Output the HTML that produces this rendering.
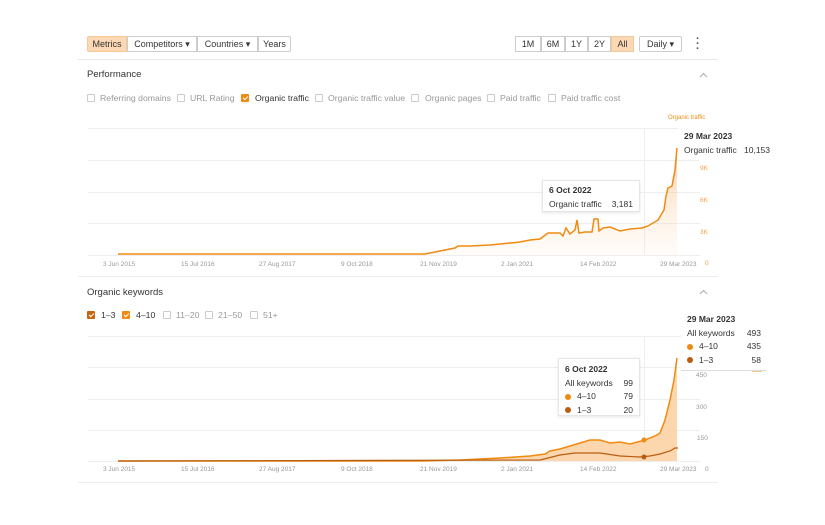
<!DOCTYPE html>
<html><head><meta charset="utf-8"><style>
*{margin:0;padding:0;box-sizing:border-box}
body{width:825px;height:525px;background:#fff;font-family:"Liberation Sans",sans-serif;position:relative;overflow:hidden;color:#333}
.a{position:absolute;white-space:nowrap}
.btn{position:absolute;top:36px;height:16px;border:1px solid #ccc;font-size:9px;line-height:14px;text-align:center;background:#fff;color:#333}
.sel{background:#fcd9b4;border-color:#f5c89c}
.cb{position:absolute;width:8px;height:8px;border:1px solid #ccc;border-radius:1px}
.cbo{background:#f08a10;border-color:#f08a10}
.cbd{background:#c7650e;border-color:#c7650e}
.cbo::after,.cbd::after{content:"";position:absolute;left:2px;top:0px;width:2px;height:4px;border:solid #fff;border-width:0 1px 1px 0;transform:rotate(45deg)}
.lbl{font-size:8.7px;color:#999;position:absolute}
.h{font-size:9.5px;color:#333;position:absolute}
.tt{position:absolute;background:#fff;font-size:8.5px;color:#333}
.ax{font-size:6.5px;color:#999;position:absolute}
.yo{font-size:6.5px;color:#f5a04a;position:absolute}
.dot{display:inline-block;width:6px;height:6px;border-radius:3px;margin-right:6px;vertical-align:middle}
</style></head><body>
<div class="btn sel" style="left:87px;width:40px;border-radius:2px 0 0 2px">Metrics</div>
<div class="btn" style="left:127px;width:70px">Competitors ▾</div>
<div class="btn" style="left:197px;width:61px">Countries ▾</div>
<div class="btn" style="left:258px;width:33px;border-radius:0 2px 2px 0">Years</div>
<div class="btn" style="left:515px;width:26px">1M</div>
<div class="btn" style="left:541px;width:24px">6M</div>
<div class="btn" style="left:565px;width:23px">1Y</div>
<div class="btn" style="left:588px;width:23px">2Y</div>
<div class="btn sel" style="left:611px;width:23px">All</div>
<div class="btn" style="left:639px;width:43px;border-radius:2px">Daily ▾</div>
<div class="a" style="left:696px;top:37px;font-size:11px;font-weight:bold;color:#555;line-height:5px">·<br>·<br>·</div>
<div class="a" style="left:78px;top:59px;width:640px;border-top:1px solid #e8e8e8"></div>
<div class="h" style="left:87px;top:69px">Performance</div>
<div class="cb" style="left:87px;top:94px"></div><div class="lbl" style="left:100px;top:93px">Referring domains</div>
<div class="cb" style="left:177px;top:94px"></div><div class="lbl" style="left:190px;top:93px">URL Rating</div>
<div class="cb cbo" style="left:241px;top:94px"></div><div class="lbl" style="left:255px;top:93px;color:#333">Organic traffic</div>
<div class="cb" style="left:315px;top:94px"></div><div class="lbl" style="left:328px;top:93px">Organic traffic value</div>
<div class="cb" style="left:411px;top:94px"></div><div class="lbl" style="left:425px;top:93px">Organic pages</div>
<div class="cb" style="left:487px;top:94px"></div><div class="lbl" style="left:500px;top:93px">Paid traffic</div>
<div class="cb" style="left:548px;top:94px"></div><div class="lbl" style="left:561px;top:93px">Paid traffic cost</div>
<div class="a" style="left:668px;top:115px;font-size:6px;color:#f08a10">Organic traffic</div>

<svg class="a" style="left:0;top:0" width="825" height="525">
<defs>
<linearGradient id="g1" x1="0" y1="0" x2="0" y2="1"><stop offset="0" stop-color="#f8b070" stop-opacity=".6"/><stop offset="1" stop-color="#fde0c4" stop-opacity=".1"/></linearGradient>
</defs>
<path d="M700,77 L703.5,73.5 707,77" fill="none" stroke="#aaa" stroke-width="1"/>
<path d="M700,294 L703.5,290.5 707,294" fill="none" stroke="#aaa" stroke-width="1"/>
<g stroke="#eee" stroke-width="1">
<line x1="88" y1="128.5" x2="700" y2="128.5"/><line x1="88" y1="160.5" x2="700" y2="160.5"/><line x1="88" y1="192.5" x2="700" y2="192.5"/><line x1="88" y1="223.5" x2="700" y2="223.5"/><line x1="88" y1="255.5" x2="700" y2="255.5"/>
<line x1="644.5" y1="128" x2="644.5" y2="256"/>
<line x1="88" y1="336.5" x2="700" y2="336.5"/><line x1="88" y1="367.5" x2="700" y2="367.5"/><line x1="88" y1="399.5" x2="700" y2="399.5"/><line x1="88" y1="430.5" x2="700" y2="430.5"/><line x1="88" y1="461.5" x2="700" y2="461.5"/>
<line x1="644.5" y1="336" x2="644.5" y2="462"/>
<line x1="78" y1="276.5" x2="718" y2="276.5"/>
<line x1="78" y1="482.5" x2="718" y2="482.5"/>
</g>
<path d="M425,254 L430,253 440,251 455,248 458,246 470,246 490,245 500,244 520,242 530,240 540,239 548,233 560,233 563,236 566,228 570,234 575,230 577,220 579,233 585,232 592,232 594,219 598,219 599,231 603,228 610,227 620,231 630,229 642,228 648,226 658,220 664,210 666,196 668,188 672,186 675,170 677,148 L677,255 L425,255Z" fill="url(#g1)"/>
<path d="M118,254 L425,254 430,253 440,251 455,248 458,246 470,246 490,245 500,244 520,242 530,240 540,239 548,233 560,233 563,236 566,228 570,234 575,230 577,220 579,233 585,232 592,232 594,219 598,219 599,231 603,228 610,227 620,231 630,229 642,228 648,226 658,220 664,210 666,196 668,188 672,186 675,170 677,148" fill="none" stroke="#f08a10" stroke-width="1.5"/>
<path d="M420,461 L460,460 500,458 530,456 545,454 550,451 560,449 570,446 580,443 590,440 600,440 610,443 620,442 630,444 645,440 655,436 660,433 665,420 670,400 674,380 677,358 L677,461 L420,461Z" fill="#fbcf9f" opacity=".85"/>
<path d="M118,461 L420,461 460,460 500,458 530,456 545,454 550,451 560,449 570,446 580,443 590,440 600,440 610,443 620,442 630,444 645,440 655,436 660,433 665,420 670,400 674,380 677,358" fill="none" stroke="#f08a10" stroke-width="1.5"/>
<path d="M118,461 L540,460 560,455 575,453 590,453 600,453 620,456 640,457 650,456 660,454 670,451 675,448 678,448" fill="none" stroke="#b85e10" stroke-width="1.2"/>
<circle cx="644" cy="440" r="2.5" fill="#f08a10"/><circle cx="644" cy="457" r="2.5" fill="#b85e10"/>
<line x1="752" y1="371" x2="762" y2="371" stroke="#f08a10"/>
</svg>

<div class="ax" style="left:103px;top:261px">3 Jun 2015</div>
<div class="ax" style="left:181px;top:261px">15 Jul 2016</div>
<div class="ax" style="left:259px;top:261px">27 Aug 2017</div>
<div class="ax" style="left:341px;top:261px">9 Oct 2018</div>
<div class="ax" style="left:420px;top:261px">21 Nov 2019</div>
<div class="ax" style="left:501px;top:261px">2 Jan 2021</div>
<div class="ax" style="left:580px;top:261px">14 Feb 2022</div>
<div class="ax" style="left:660px;top:261px">29 Mar 2023</div>
<div class="yo" style="left:700px;top:165px">9K</div><div class="yo" style="left:700px;top:197px">6K</div><div class="yo" style="left:700px;top:229px">3K</div><div class="yo" style="left:705px;top:260px">0</div>

<div class="tt" style="left:542px;top:180px;width:98px;height:32px;border:1px solid #e6e6e6;box-shadow:0 1px 3px rgba(0,0,0,.1);padding:4px 6px">
<div style="font-weight:bold;margin-bottom:4px">6 Oct 2022</div><div>Organic traffic<span style="float:right">3,181</span></div></div>
<div class="tt" style="left:678px;top:128px;width:98px;height:30px;padding:3px 6px">
<div style="font-weight:bold;margin-bottom:4px">29 Mar 2023</div><div>Organic traffic<span style="float:right">10,153</span></div></div>

<div class="h" style="left:87px;top:287px">Organic keywords</div>
<div class="cb cbd" style="left:87px;top:311px"></div><div class="lbl" style="left:101px;top:310px;color:#333">1–3</div>
<div class="cb cbo" style="left:122px;top:311px"></div><div class="lbl" style="left:136px;top:310px;color:#333">4–10</div>
<div class="cb" style="left:163px;top:311px"></div><div class="lbl" style="left:176px;top:310px">11–20</div>
<div class="cb" style="left:205px;top:311px"></div><div class="lbl" style="left:218px;top:310px">21–50</div>
<div class="cb" style="left:250px;top:311px"></div><div class="lbl" style="left:263px;top:310px">51+</div>

<div class="ax" style="left:103px;top:466px">3 Jun 2015</div>
<div class="ax" style="left:181px;top:466px">15 Jul 2016</div>
<div class="ax" style="left:259px;top:466px">27 Aug 2017</div>
<div class="ax" style="left:341px;top:466px">9 Oct 2018</div>
<div class="ax" style="left:420px;top:466px">21 Nov 2019</div>
<div class="ax" style="left:501px;top:466px">2 Jan 2021</div>
<div class="ax" style="left:580px;top:466px">14 Feb 2022</div>
<div class="ax" style="left:660px;top:466px">29 Mar 2023</div>
<div class="ax" style="left:696px;top:372px">450</div><div class="ax" style="left:696px;top:404px">300</div><div class="ax" style="left:697px;top:435px">150</div><div class="ax" style="left:705px;top:466px">0</div>

<div class="tt" style="left:558px;top:358px;width:82px;height:58px;border:1px solid #e6e6e6;box-shadow:0 1px 3px rgba(0,0,0,.1);padding:4px 6px;line-height:13.5px">
<div style="font-weight:bold">6 Oct 2022</div>
<div>All keywords<span style="float:right">99</span></div>
<div><span class="dot" style="background:#f08a10"></span>4–10<span style="float:right">79</span></div>
<div><span class="dot" style="background:#b85e10"></span>1–3<span style="float:right">20</span></div></div>
<div class="tt" style="left:681px;top:313px;width:86px;height:58px;padding:0 6px;line-height:13.5px;border-bottom:1px solid #ddd">
<div style="font-weight:bold">29 Mar 2023</div>
<div>All keywords<span style="float:right">493</span></div>
<div><span class="dot" style="background:#f08a10"></span>4–10<span style="float:right">435</span></div>
<div><span class="dot" style="background:#b85e10"></span>1–3<span style="float:right">58</span></div></div>
</body></html>
